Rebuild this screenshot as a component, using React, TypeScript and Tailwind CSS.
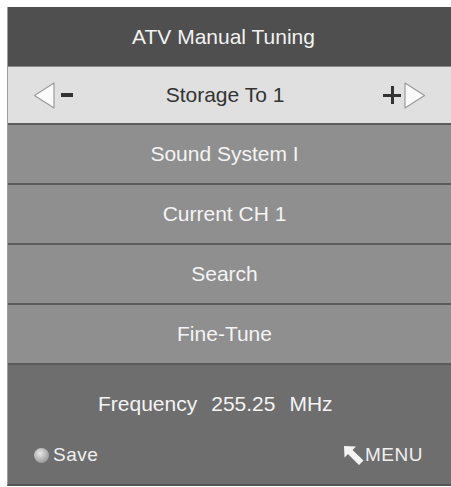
import React from "react"

const font = { fontFamily: '"Liberation Sans", Arial, sans-serif' }

function LeftArrow() {
  return (
    <svg width="23" height="27" viewBox="0 0 23 27" className="shrink-0">
      <polygon points="21,1 21,26 1.5,13.5" fill="#fafafa" stroke="#9a9a9a" strokeWidth="1.2" strokeLinejoin="round" />
    </svg>
  )
}

function RightArrow() {
  return (
    <svg width="23" height="27" viewBox="0 0 23 27" className="shrink-0">
      <polygon points="2,1 2,26 21.5,13.5" fill="#fafafa" stroke="#9a9a9a" strokeWidth="1.2" strokeLinejoin="round" />
    </svg>
  )
}

function MenuArrow() {
  return (
    <svg width="20" height="19" viewBox="0 0 20 19" className="shrink-0">
      <polygon points="0,0 12,0.5 8.5,4 19.5,14.5 15,19 4,8 0.5,11.5" fill="#f4f4f4" />
    </svg>
  )
}

const rows = ["Sound System I", "Current CH 1", "Search", "Fine-Tune"]

export default function App() {
  return (
    <div className="w-[451px] h-[487px] bg-white pt-[7px] pl-[7px] overflow-hidden" style={font}>
      <div className="w-[444px] h-[479px] flex flex-col border-l border-[#9c9c9c] border-b-2 border-b-[#555]">
        {/* title */}
        <div className="h-[59px] shrink-0 bg-[#4f4f4f] flex items-center justify-center pr-[12px] text-[21px] text-[#f2f2f2]">
          ATV Manual Tuning
        </div>

        {/* storage selector */}
        <div className="h-[57px] shrink-0 bg-[#e0e0e0] border-t border-[#8a8a8a] flex items-center pl-[25px] pr-[25px] text-[21px] text-[#333]">
          <LeftArrow />
          <div className="w-[12px] h-[4px] bg-[#333] ml-[5px]" />
          <div className="flex-1 text-center pr-[6px]">Storage To 1</div>
          <div className="relative w-[18px] h-[18px] mr-[2px]">
            <div className="absolute left-0 right-0 top-[7.5px] h-[3px] bg-[#333]" />
            <div className="absolute top-0 bottom-0 left-[7.5px] w-[3px] bg-[#333]" />
          </div>
          <RightArrow />
        </div>

        {rows.map(r => (
          <div
            key={r}
            className="h-[60px] shrink-0 bg-[#8f8f8f] border-t-2 border-[#5c5c5c] flex items-center justify-center pr-[10px] text-[21px] text-[#f4f4f4]"
          >
            {r}
          </div>
        ))}

        {/* footer */}
        <div className="flex-1 bg-[#6e6e6e] border-t-2 border-[#5a5a5a] flex flex-col">
          <div className="pt-[27px] pl-[90px] flex gap-[14px] text-[21px] text-[#f4f4f4] leading-[24px]">
            <span>Frequency</span>
            <span>255.25</span>
            <span>MHz</span>
          </div>
          <div className="mt-[25px] flex items-center justify-between pl-[26px] pr-[28px] text-[19px] text-[#f0f0f0]">
            <div className="flex items-center gap-[4px]">
              <div className="w-[15px] h-[15px] rounded-full bg-[radial-gradient(circle_at_40%_35%,#e8e8e8,#a8a8a8_60%,#8a8a8a)]" />
              <span className="tracking-[0.5px]">Save</span>
            </div>
            <div className="flex items-center gap-[1px]">
              <MenuArrow />
              <span className="tracking-[0.5px]">MENU</span>
            </div>
          </div>
        </div>
      </div>
    </div>
  )
}
